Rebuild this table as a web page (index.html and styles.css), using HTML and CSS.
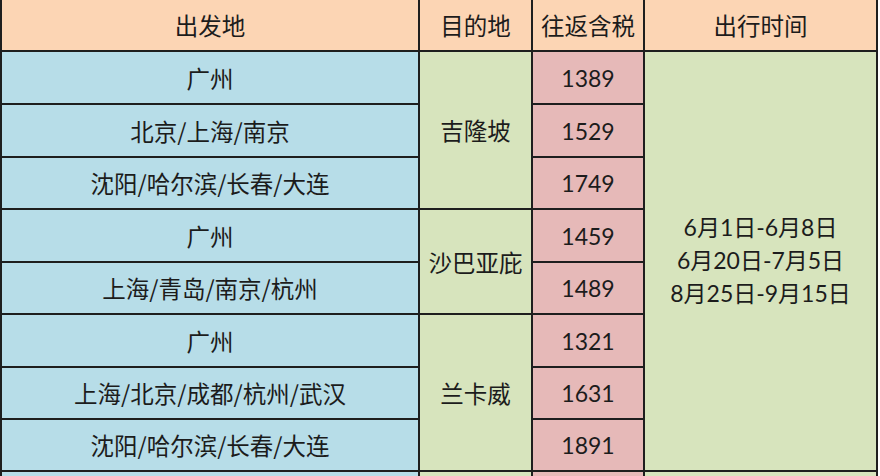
FILE: index.html
```html
<!DOCTYPE html>
<html lang="zh">
<head>
<meta charset="utf-8">
<link rel="stylesheet" href="styles.css">
</head>
<body>
<div class="sheet">
  <div class="cell head">出发地</div>
  <div class="cell head">目的地</div>
  <div class="cell head">往返含税</div>
  <div class="cell head">出行时间</div>

  <div class="cell from">广州</div>
  <div class="cell dest d1">吉隆坡</div>
  <div class="cell price">1389</div>
  <div class="cell time">
    <div>6月1日-6月8日</div>
    <div>6月20日-7月5日</div>
    <div>8月25日-9月15日</div>
  </div>

  <div class="cell from">北京/上海/南京</div>
  <div class="cell price">1529</div>

  <div class="cell from">沈阳/哈尔滨/长春/大连</div>
  <div class="cell price">1749</div>

  <div class="cell from">广州</div>
  <div class="cell dest d2">沙巴亚庇</div>
  <div class="cell price">1459</div>

  <div class="cell from">上海/青岛/南京/杭州</div>
  <div class="cell price">1489</div>

  <div class="cell from">广州</div>
  <div class="cell dest d3">兰卡威</div>
  <div class="cell price">1321</div>

  <div class="cell from">上海/北京/成都/杭州/武汉</div>
  <div class="cell price">1631</div>

  <div class="cell from">沈阳/哈尔滨/长春/大连</div>
  <div class="cell price">1891</div>

  <div class="cell from"></div>
  <div class="cell dest"></div>
  <div class="cell price"></div>
  <div class="cell time-next"></div>
</div>
</body>
</html>
```
FILE: styles.css
```css
html, body {
  margin: 0;
  padding: 0;
  background: #ffffff;
}
body {
  width: 880px;
  height: 476px;
  overflow: hidden;
}
.sheet {
  display: grid;
  width: 874px;
  padding: 0 2px;
  background: #1e1e1e;
  grid-template-columns: 416px 111px 110px 231px;
  grid-template-rows: 50px 51px 51px 50px 51px 50px 51px 50px 50px 4px;
  column-gap: 2px;
  row-gap: 2px;
  font-family: "Lato", "Noto Sans CJK SC", sans-serif;
  font-size: 23px;
  color: #1c1c1c;
}
.cell {
  display: flex;
  align-items: center;
  justify-content: center;
  white-space: nowrap;
  overflow: hidden;
}
.head,
.from,
.dest {
  font-family: "Noto Sans CJK SC", sans-serif;
  font-size: 23.5px;
}
.head {
  background: #fcd5b4;
}
.from {
  background: #b7dde8;
}
.dest {
  background: #d7e4bd;
  grid-column: 2;
}
.d1 { grid-row: 2 / 5; }
.d2 { grid-row: 5 / 7; }
.d3 { grid-row: 7 / 10; }
.price {
  background: #e6b9b8;
  grid-column: 3;
}
.time {
  background: #d7e4bd;
  grid-column: 4;
  grid-row: 2 / 10;
  flex-direction: column;
  line-height: 33px;
  padding-bottom: 2px;
}
.time-next {
  background: #d7e4bd;
  grid-column: 4;
}
```
